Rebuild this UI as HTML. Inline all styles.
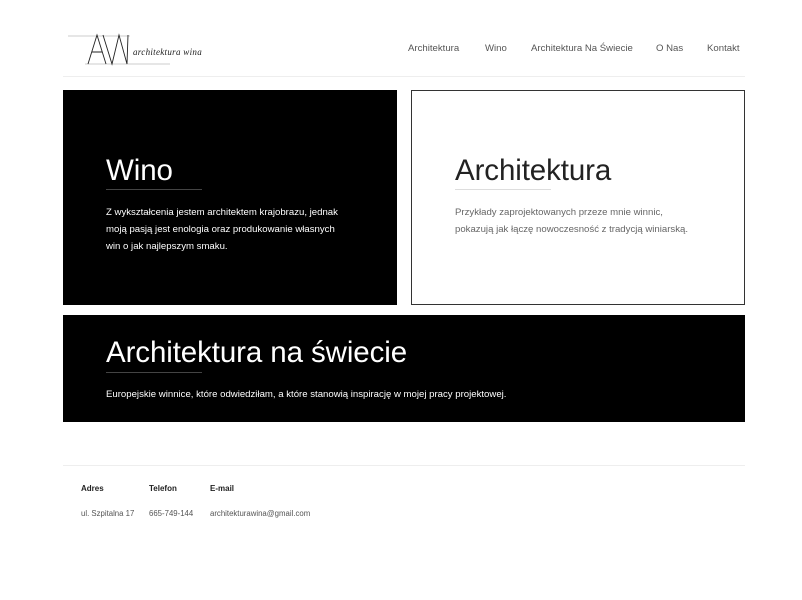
<!DOCTYPE html>
<html><head><meta charset="utf-8"><style>
*{margin:0;padding:0;box-sizing:border-box}
body{width:802px;height:600px;background:#fff;font-family:"Liberation Sans",sans-serif;position:relative;overflow:hidden;color:#333}
.a{position:absolute}
.nav{top:43px;font-size:9.6px;color:#555;white-space:nowrap}
.box{position:absolute}
h2{position:absolute;font-weight:normal;font-size:29.5px;white-space:nowrap;letter-spacing:-0.1px}
.ul{position:absolute;height:1px;width:96px}
p{position:absolute;font-size:9.6px;line-height:17px;white-space:nowrap}
.fl{font-size:8px;font-weight:bold;color:#222}
.fv{font-size:7.8px;color:#555}
</style></head><body>
<svg class="a" style="left:65px;top:30px" width="145" height="40" viewBox="0 0 145 40">
<line x1="3" y1="6" x2="65" y2="6" stroke="#bbb" stroke-width="0.8"/>
<line x1="20" y1="34" x2="105" y2="34" stroke="#bbb" stroke-width="0.8"/>
<path d="M23 34 L32 5 L41 34 M27 22 L37 22 M38 5 L47 34 L54 5 L62 34 L63 5" fill="none" stroke="#222" stroke-width="0.9"/>
<text x="68" y="25" font-family="Liberation Serif,serif" font-style="italic" font-size="9" fill="#222" letter-spacing="0.3">architektura wina</text>
</svg>
<div class="a nav" style="left:408px">Architektura</div>
<div class="a nav" style="left:485px">Wino</div>
<div class="a nav" style="left:531px">Architektura Na Świecie</div>
<div class="a nav" style="left:656px">O Nas</div>
<div class="a nav" style="left:707px">Kontakt</div>
<div class="a" style="left:63px;top:76px;width:682px;height:1px;background:#eee"></div>

<div class="box" style="left:63px;top:90px;width:334px;height:215px;background:#000"></div>
<h2 style="left:106px;top:154px;color:#fff">Wino</h2>
<div class="ul" style="left:106px;top:189px;background:#444"></div>
<p style="left:106px;top:204px;color:#fff">Z wykształcenia jestem architektem krajobrazu, jednak<br>moją pasją jest enologia oraz produkowanie własnych<br>win o jak najlepszym smaku.</p>

<div class="box" style="left:411px;top:90px;width:334px;height:215px;border:1px solid #333;background:#fff"></div>
<h2 style="left:455px;top:154px;color:#222">Architektura</h2>
<div class="ul" style="left:455px;top:189px;background:#ddd"></div>
<p style="left:455px;top:204px;color:#666">Przykłady zaprojektowanych przeze mnie winnic,<br>pokazują jak łączę nowoczesność z tradycją winiarską.</p>

<div class="box" style="left:63px;top:315px;width:682px;height:107px;background:#000"></div>
<h2 style="left:106px;top:336px;color:#fff">Architektura na świecie</h2>
<div class="ul" style="left:106px;top:372px;background:#444"></div>
<p style="left:106px;top:386px;color:#fff">Europejskie winnice, które odwiedziłam, a które stanowią inspirację w mojej pracy projektowej.</p>

<div class="a" style="left:63px;top:465px;width:682px;height:1px;background:#eee"></div>
<div class="a fl" style="left:81px;top:484px">Adres</div>
<div class="a fl" style="left:149px;top:484px">Telefon</div>
<div class="a fl" style="left:210px;top:484px">E-mail</div>
<div class="a fv" style="left:81px;top:509px">ul. Szpitalna 17</div>
<div class="a fv" style="left:149px;top:509px">665-749-144</div>
<div class="a fv" style="left:210px;top:509px">architekturawina@gmail.com</div>
</body></html>
